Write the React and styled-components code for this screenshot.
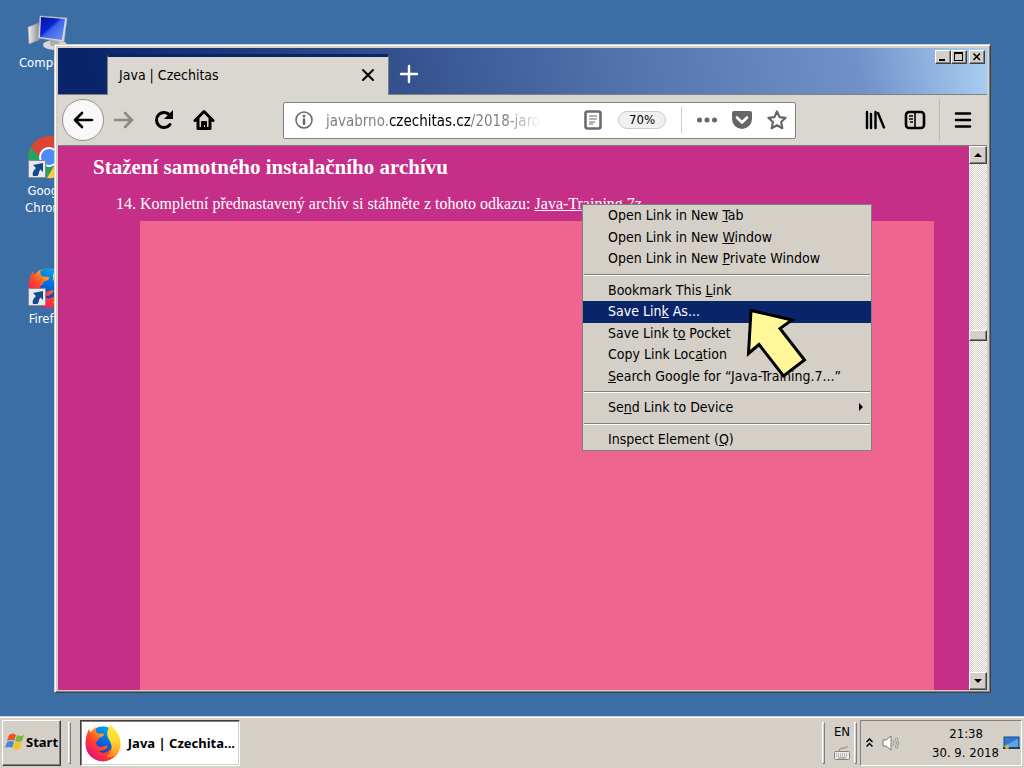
import React from "react";
import styled, { createGlobalStyle, css } from "styled-components";

const ui = `"DejaVu Sans Condensed", "DejaVu Sans", sans-serif`;
const uiBold = `"Noto Sans", sans-serif`;

const GlobalStyle = createGlobalStyle`
  *, *::before, *::after { box-sizing: border-box; }
  body { margin: 0; font-family: ${ui}; font-size: 13px; color: #000; }
  button, input { font: inherit; color: inherit; }
  h2, p, ol { margin: 0; padding: 0; }
`;

const raised = css`
  border: 1px solid;
  border-color: #fff #404040 #404040 #fff;
  box-shadow: inset -1px -1px 0 #808080;
`;

const Screen = styled.div`
  min-height: 100vh;
  display: flex;
  flex-direction: column;
  overflow: hidden;
`;

const Desktop = styled.main`
  position: relative;
  flex: 1;
  background: #3b6ea5;
`;

const Shortcuts = styled.nav`
  display: flex;
  flex-direction: column;
  width: 96px;
`;

const Shortcut = styled.a`
  display: flex;
  flex-direction: column;
  align-items: center;
  height: 128px;
  padding-top: 6px;
  color: #fff;
  font-size: 13px;
  line-height: 17px;
  text-align: center;
  text-decoration: none;
`;

const ShortcutLabel = styled.span`
  max-width: 64px;
`;

const Window = styled.section`
  position: absolute;
  inset: 44px 33px 23px 54px;
  display: flex;
  flex-direction: column;
  padding: 2px;
  background: #d4d0c8;
  border: 1px solid;
  border-color: #d4d0c8 #404040 #404040 #d4d0c8;
  box-shadow: inset 1px 1px 0 #fff, inset -1px -1px 0 #808080;
`;

const WindowInner = styled.div`
  flex: 1;
  min-height: 0;
  margin: 1px;
  margin-bottom: 0;
  display: flex;
  flex-direction: column;
`;

const TitleBar = styled.header`
  display: flex;
  align-items: flex-end;
  height: 47px;
  padding-left: 49px;
  border-bottom: 1px solid #808080;
  background: linear-gradient(80deg, #0a246a 4%, #36538f 38%, #5272ac 60%, #7191c8 86%, #a6caf0 99%);
`;

const Tab = styled.div`
  display: flex;
  align-items: center;
  justify-content: space-between;
  width: 282px;
  height: 41px;
  margin-bottom: -1px;
  padding: 0 12px 2px 11px;
  background: #dad7d0;
  border-top: 3px solid #0a246a;
  border-left: 1px solid #808080;
  border-right: 1px solid #808080;
  font-size: 14px;
`;

const IconButton = styled.button`
  display: grid;
  place-items: center;
  width: ${(p) => p.$w || 40}px;
  height: ${(p) => p.$h || 40}px;
  padding: 0;
  border: 0;
  background: none;
`;

const WindowControls = styled.div`
  display: flex;
  align-self: flex-start;
  margin: 2px 2px 0 auto;
`;

const ControlButton = styled.button`
  ${raised}
  display: grid;
  place-items: center;
  width: 16px;
  height: 14px;
  padding: 0;
  background: #d4d0c8;
  margin-left: ${(p) => (p.$apart ? 2 : 0)}px;
`;

const Toolbar = styled.div`
  display: flex;
  align-items: center;
  height: 51px;
  padding: 0 4px;
  background: #dad7d0;
  border-bottom: 1px solid #808080;
`;

const BackButton = styled.button`
  display: grid;
  place-items: center;
  width: 42px;
  height: 42px;
  padding: 0;
  border: 1px solid #96948f;
  border-radius: 50%;
  background: #f8f8f6;
`;

const ToolDivider = styled.span`
  width: 1px;
  height: 42px;
  margin: 0 3px 0 4px;
  background: #bcb9b3;
`;

const AddressBar = styled.div`
  display: flex;
  flex: 1;
  align-items: center;
  min-width: 0;
  height: 37px;
  margin: 0 59px;
  padding-left: 4px;
  background: #fff;
  border: 1px solid #808080;
  border-radius: 2px;
`;

const AddressInput = styled.input`
  flex: 1;
  min-width: 0;
  height: 30px;
  padding: 2px 0 0 6px;
  border: 0;
  outline: 0;
  font-size: 15px;
  color: transparent;
  background: linear-gradient(to right, #7c7c7c 69px, #000 69px, #000 151px, #7c7c7c 151px, #7c7c7c 185px, transparent 222px);
  -webkit-background-clip: text;
  background-clip: text;
`;

const ZoomBadge = styled.button`
  width: 48px;
  height: 18px;
  margin: 0 15px 0 6px;
  padding: 0;
  border: 1px solid #ccc;
  border-radius: 9px;
  background: #f0f0f0;
  font-size: 13px;
  line-height: 16px;
`;

const BarDivider = styled.span`
  width: 1px;
  height: 26px;
  margin-right: 8px;
  background: #ccc;
`;

const Viewport = styled.div`
  flex: 1;
  display: flex;
  min-height: 0;
`;

const Page = styled.article`
  flex: 1;
  display: flex;
  flex-direction: column;
  min-width: 0;
  padding: 8px 35px 0;
  overflow: hidden;
  background: #c62f88;
  color: #fff;
  font-family: "Liberation Serif", "Times New Roman", serif;
`;

const Heading = styled.h2`
  font-size: 21px;
  line-height: 26px;
`;

const Steps = styled.ol`
  margin-top: 14px;
  padding-left: 47px;
  font-size: 16px;
  line-height: 20px;
  white-space: nowrap;
  a { color: inherit; }
`;

const Figure = styled.div`
  flex: 1;
  margin: 7px 0 0 47px;
  background: #ee6690;
`;

const ScrollBar = styled.div`
  display: flex;
  flex-direction: column;
  width: 18px;
`;

const ScrollButton = styled.button`
  ${raised}
  display: grid;
  place-items: center;
  height: 18px;
  padding: 0;
  background: #d4d0c8;
`;

const Track = styled.div`
  flex: 1;
  display: grid;
  grid-template-rows: 167fr 11px 332fr;
  background: repeating-conic-gradient(#fff 0 25%, #d4d0c8 0 50%) 0 0 / 2px 2px;
`;

const Thumb = styled.div`
  ${raised}
  grid-row: 2;
  background: #d4d0c8;
`;

const Menu = styled.div`
  position: absolute;
  left: 582px;
  top: 204px;
  width: 290px;
  height: 247px;
  display: flex;
  flex-direction: column;
  background: #d4d0c8;
  border: 1px solid #808080;
`;

const MenuItem = styled.button`
  flex: 1;
  display: flex;
  align-items: center;
  justify-content: space-between;
  min-height: 0;
  padding: 0 8px 1px 25px;
  border: 0;
  font-size: 14px;
  line-height: 20px;
  text-align: left;
  white-space: pre;
  background: ${(p) => (p.$active ? "#0a246a" : "transparent")};
  color: ${(p) => (p.$active ? "#fff" : "#000")};
`;

const MenuRule = styled.hr`
  flex: none;
  width: calc(100% - 2px);
  height: 2px;
  margin: 4px 1px;
  border: 0;
  border-top: 1px solid #808080;
  border-bottom: 1px solid #fff;
`;

const Pointer = styled.svg`
  position: absolute;
  left: 744px;
  top: 304px;
`;

const Taskbar = styled.footer`
  display: flex;
  align-items: center;
  height: 52px;
  padding: 2px 2px 0;
  background: #d4d0c8;
  box-shadow: inset 0 1px 0 #d4d0c8, inset 0 2px 0 #fff;
`;

const StartButton = styled.button`
  ${raised}
  display: flex;
  align-items: center;
  gap: 1px;
  width: 59px;
  height: 46px;
  padding: 0 0 2px 2px;
  background: #d4d0c8;
  font-family: ${uiBold};
  font-size: 13px;
  font-weight: 700;
`;

const Grip = styled.span`
  width: 3px;
  height: 42px;
  margin: ${(p) => p.$margin};
  border: 1px solid;
  border-color: #fff #808080 #808080 #fff;
`;

const TaskButton = styled.button`
  display: flex;
  align-items: center;
  gap: 5px;
  width: 160px;
  height: 46px;
  padding: 0 4px;
  border: 1px solid;
  border-color: #404040 #fff #fff #404040;
  box-shadow: inset 1px 1px 0 #808080, inset -1px -1px 0 #d4d0c8;
  background: #fff;
  font-family: ${uiBold};
  font-size: 13px;
  font-weight: 700;
  white-space: nowrap;
`;

const Language = styled.div`
  display: flex;
  flex-direction: column;
  align-items: center;
  gap: 4px;
  width: 24px;
  padding-bottom: 3px;
  font-size: 13px;
  line-height: 18px;
`;

const Tray = styled.div`
  display: flex;
  align-items: center;
  width: 162px;
  height: 46px;
  padding: 0 1px 0 5px;
  border: 1px solid;
  border-color: #808080 #fff #fff #808080;
`;

const Clock = styled.time`
  flex: 1;
  padding-right: 4px;
  font-size: 13px;
  line-height: 19px;
  text-align: right;
`;

const ClockTime = styled.span`
  display: block;
  padding-right: 16px;
`;

function ShortcutArrow() {
  return (
    <g>
      <rect x="4.5" y="26.500" width="17" height="17" fill="#e6eaf0" stroke="#8c8c8c" />
      <path d="M9 42c-1-3 0-5 3-8l-3-3 10-2v9l-2.500-2.500c-2 2-1 4-3 6.500z" fill="#174a8c" />
    </g>
  );
}

function ComputerIcon() {
  return (
    <svg width="48" height="48" viewBox="0 0 48 48" aria-hidden="true">
      <defs>
        <linearGradient id="scr" x1="0" y1="0" x2="1" y2="1">
          <stop offset="0" stopColor="#0618a0" />
          <stop offset=".4" stopColor="#0b22d0" />
          <stop offset=".5" stopColor="#3d63ea" />
          <stop offset="1" stopColor="#6d96f5" />
        </linearGradient>
        <linearGradient id="case" x1="0" y1="0" x2="1" y2="0">
          <stop offset="0" stopColor="#f2f2f2" />
          <stop offset="1" stopColor="#8d8d8d" />
        </linearGradient>
      </defs>
      <path d="M4 21l11-4v17L5 38z" fill="url(#case)" stroke="#999" strokeWidth=".6" />
      <ellipse cx="31" cy="39" rx="12" ry="5" fill="#d6d6d6" />
      <path d="M25 32h9l2 8h-9z" fill="#aaa" />
      <path d="M16 10l27 2-3 24-26-4z" fill="#d8dce2" stroke="#a5a8ad" strokeWidth=".6" />
      <path d="M17 11l24 2-3 21-22-3z" fill="url(#scr)" />
    </svg>
  );
}

function ChromeIcon() {
  return (
    <svg width="48" height="48" viewBox="0 0 48 48" aria-hidden="true">
      <circle cx="25" cy="23" r="21" fill="#db4437" />
      <path d="M7 13a21 21 0 0 0 16 31l9-17-14-1z" fill="#1fa463" />
      <path d="M46 17a21 21 0 0 1-23 27l10-17V17z" fill="#ffcd40" />
      <circle cx="25" cy="23" r="10" fill="#fff" />
      <circle cx="25" cy="23" r="8" fill="#4c8bf5" />
      <ShortcutArrow />
    </svg>
  );
}

function FirefoxArt({ id }) {
  return (
    <g>
      <defs>
        <linearGradient id={id + "o"} x1="0.9" y1="0.1" x2="0.2" y2="0.9">
          <stop offset="0" stopColor="#fff44f" />
          <stop offset=".35" stopColor="#ffa821" />
          <stop offset=".65" stopColor="#ff4528" />
          <stop offset="1" stopColor="#e8127a" />
        </linearGradient>
        <linearGradient id={id + "b"} x1="0.7" y1="0" x2="0.3" y2="1">
          <stop offset="0" stopColor="#00a6f5" />
          <stop offset=".6" stopColor="#0a5bd8" />
          <stop offset="1" stopColor="#302a9c" />
        </linearGradient>
        <linearGradient id={id + "y"} x1="0" y1="0" x2="0" y2="1">
          <stop offset="0" stopColor="#fff04a" />
          <stop offset=".5" stopColor="#ffd52e" />
          <stop offset="1" stopColor="#ff8c1a" />
        </linearGradient>
      </defs>
      <circle cx="18" cy="20" r="17.500" fill={`url(#${id}o)`} />
      <circle cx="18" cy="17" r="14.500" fill={`url(#${id}b)`} />
      <path d="M1 22C0 15 2 9 4 5c1 1 1 2 1 4l2-1c1-2 2-3 4-5 0 3 0 4 1 6 2 1 5 0 7 1 0 3-3 3-5 4-1 2-1 3-3 4 0 3 2 5 5 5 3 0 4-2 7-1-2 4-5 5-9 5 3 3 9 2 12-2 2-3 2-7 1-11-2-7-4-9-2-14 3 4 7 7 9 12 2 8 1 15-4 20-5 5-13 7-20 3C5 32 2 28 1 22z" fill={`url(#${id}o)`} />
      <path d="M25 1c4 4 9 8 10 14 2 8-1 14-6 17-4 2-7 1-7 0 6-3 6-8 3-15-4-6-3-9 0-16z" fill={`url(#${id}y)`} />
    </g>
  );
}

function FirefoxIcon() {
  return (
    <svg width="48" height="48" viewBox="0 0 48 48" aria-hidden="true">
      <g transform="translate(4 4) scale(1.12)">
        <FirefoxArt id="d" />
      </g>
      <ShortcutArrow />
    </svg>
  );
}

const stroke = { fill: "none", stroke: "currentColor", strokeWidth: 2.6, strokeLinecap: "round", strokeLinejoin: "round" };

function Svg({ w = 22, h = 22, children, ...rest }) {
  return (
    <svg width={w} height={h} viewBox={`0 0 ${w} ${h}`} aria-hidden="true" {...rest}>
      {children}
    </svg>
  );
}

export default function App() {
  return (
    <Screen>
      <GlobalStyle />
      <Desktop>
        <Shortcuts aria-label="Desktop">
          <Shortcut href="#computer"><ComputerIcon /><ShortcutLabel>Computer</ShortcutLabel></Shortcut>
          <Shortcut href="#chrome"><ChromeIcon /><ShortcutLabel>Google Chrome</ShortcutLabel></Shortcut>
          <Shortcut href="#firefox"><FirefoxIcon /><ShortcutLabel>Firefox</ShortcutLabel></Shortcut>
        </Shortcuts>

        <Window>
          <WindowInner>
            <TitleBar>
              <Tab>
                <span>Java | Czechitas</span>
                <IconButton $w={16} $h={24} aria-label="Close tab">
                  <Svg w={14} h={14}><path d="M2 2l10 10M12 2L2 12" {...stroke} strokeWidth="2" /></Svg>
                </IconButton>
              </Tab>
              <IconButton aria-label="New tab">
                <Svg><path d="M11 3v16M3 11h16" {...stroke} stroke="#fff" strokeWidth="2.400" /></Svg>
              </IconButton>
              <WindowControls>
                <ControlButton aria-label="Minimize"><Svg w={10} h={8}><path d="M1 6h6v2H1z" /></Svg></ControlButton>
                <ControlButton aria-label="Maximize">
                  <Svg w={10} h={10}><path d="M0 0h9v9H0zM1 2v6h7V2z" fillRule="evenodd" /></Svg>
                </ControlButton>
                <ControlButton $apart aria-label="Close">
                  <Svg w={10} h={8}><path d="M1.500.5l6.500 6.500M8 .5L1.500 7" stroke="#000" strokeWidth="1.500" /></Svg>
                </ControlButton>
              </WindowControls>
            </TitleBar>

            <Toolbar>
              <BackButton aria-label="Back">
                <Svg><path d="M20 11H3M10 4l-7 7 7 7" {...stroke} /></Svg>
              </BackButton>
              <IconButton aria-label="Forward">
                <Svg color="#8c8a86"><path d="M2 11h17M12 4l7 7-7 7" {...stroke} /></Svg>
              </IconButton>
              <IconButton aria-label="Reload">
                <Svg>
                  <path d="M17 15.500A7.500 7.500 0 1 1 17 6.500" {...stroke} strokeWidth="3" />
                  <path d="M20 1v9h-9z" />
                </Svg>
              </IconButton>
              <IconButton aria-label="Home">
                <Svg>
                  <path d="M2 11.500L11 2.500l9 9M5 10v9.500h12V10" {...stroke} strokeWidth="3" />
                  <path d="M8 19v-6q0-1 1-1h4q1 0 1 1v6h-2v-3h-1v3z" />
                </Svg>
              </IconButton>
              <AddressBar>
                <IconButton $w={32} $h={30} aria-label="Site information">
                  <Svg color="#6b6b6b">
                    <circle cx="11" cy="11" r="8" {...stroke} strokeWidth="1.600" />
                    <path d="M11 10.500v4.500" {...stroke} />
                    <circle cx="11" cy="7" r="1.500" fill="currentColor" />
                  </Svg>
                </IconButton>
                <AddressInput aria-label="Address" defaultValue="javabrno.czechitas.cz/2018-jaro" />
                <IconButton $w={38} $h={30} aria-label="Reader view">
                  <Svg color="#6b6b6b">
                    <rect x="3.500" y="2.500" width="15" height="17" rx="2" {...stroke} />
                    <path d="M7 7h8M7 10h8M7 13h6M7 15h4" stroke="currentColor" strokeWidth="1.200" />
                  </Svg>
                </IconButton>
                <ZoomBadge>70%</ZoomBadge>
                <BarDivider />
                <IconButton $w={34} $h={30} aria-label="Page actions">
                  <Svg color="#666">
                    <circle cx="3.500" cy="11" r="2.500" fill="currentColor" />
                    <circle cx="11" cy="11" r="2.500" fill="currentColor" />
                    <circle cx="18.500" cy="11" r="2.500" fill="currentColor" />
                  </Svg>
                </IconButton>
                <IconButton $w={35} $h={30} aria-label="Save to Pocket">
                  <Svg>
                    <path d="M3 2h16q2 0 2 2v6a10 10 0 0 1-20 0V4q0-2 2-2z" fill="#666" />
                    <path d="M6 8.500l5 5 5-5" {...stroke} stroke="#fff" />
                  </Svg>
                </IconButton>
                <IconButton $w={36} $h={30} aria-label="Bookmark this page">
                  <Svg color="#666">
                    <path d="M11 2.500l2.600 5.600 6 .7-4.500 4.200 1.200 6.200-5.300-3-5.300 3L6.900 13 2.400 8.800l6-.7z" {...stroke} strokeWidth="2.200" />
                  </Svg>
                </IconButton>
              </AddressBar>
              <IconButton aria-label="Library">
                <Svg><path d="M3 3v16M7 5v14M11.500 3v16M14 4l6 14.500" {...stroke} strokeWidth="2.400" /></Svg>
              </IconButton>
              <IconButton aria-label="Sidebars">
                <Svg>
                  <rect x="2" y="3" width="18" height="16" rx="3" {...stroke} />
                  <path d="M11 3v16" {...stroke} strokeWidth="1.600" />
                  <path d="M5 7h4M5 10h4M6 13h3" stroke="currentColor" strokeWidth="1.300" />
                </Svg>
              </IconButton>
              <ToolDivider />
              <IconButton aria-label="Open menu">
                <Svg><path d="M4 4.500h14M4 11h14M4 17.500h14" {...stroke} /></Svg>
              </IconButton>
            </Toolbar>

            <Viewport>
              <Page>
                <Heading>Stažení samotného instalačního archívu</Heading>
                <Steps start={14}>
                  <li>Kompletní přednastavený archív si stáhněte z tohoto odkazu: <a href="#archive">Java-Training.7z</a></li>
                </Steps>
                <Figure />
              </Page>
              <ScrollBar>
                <ScrollButton aria-label="Scroll up"><Svg w={8} h={4}><path d="M4 0l4 4H0z" /></Svg></ScrollButton>
                <Track><Thumb /></Track>
                <ScrollButton aria-label="Scroll down"><Svg w={8} h={4}><path d="M0 0h8L4 4z" /></Svg></ScrollButton>
              </ScrollBar>
            </Viewport>
          </WindowInner>
        </Window>

        <Menu role="menu">
          <MenuItem role="menuitem"><span>Open Link in New <u>T</u>ab</span></MenuItem>
          <MenuItem role="menuitem"><span>Open Link in New <u>W</u>indow</span></MenuItem>
          <MenuItem role="menuitem"><span>Open Link in New <u>P</u>rivate Window</span></MenuItem>
          <MenuRule />
          <MenuItem role="menuitem"><span>Bookmark This <u>L</u>ink</span></MenuItem>
          <MenuItem role="menuitem" $active><span>Save Lin<u>k</u> As...</span></MenuItem>
          <MenuItem role="menuitem"><span>Save Link t<u>o</u> Pocket</span></MenuItem>
          <MenuItem role="menuitem"><span>Copy Link Loc<u>a</u>tion</span></MenuItem>
          <MenuItem role="menuitem"><span><u>S</u>earch Google for “Java-Training.7...”</span></MenuItem>
          <MenuRule />
          <MenuItem role="menuitem">
            <span>Se<u>n</u>d Link to Device</span>
            <Svg w={4} h={8}><path d="M0 0l4 4-4 4z" /></Svg>
          </MenuItem>
          <MenuRule />
          <MenuItem role="menuitem"><span>Inspect Element (<u>Q</u>)</span></MenuItem>
        </Menu>

        <Pointer width="66" height="78" viewBox="0 0 66 78" aria-hidden="true">
          <path d="M7 6.500L48 16 36 24.500 60.500 56 39.500 72 15 40.500 4.500 49.500z" fill="#fff799" stroke="#000" strokeWidth="3" />
        </Pointer>
      </Desktop>

      <Taskbar>
        <StartButton>
          <Svg w={20} h={18}>
            <path d="M4 2q4-3 7 0L9 8Q6 6 2 8z" fill="#e8562a" />
            <path d="M12 2q4 2 7 0l-2 6q-4 2-7 0z" fill="#7fb63b" />
            <path d="M2 9q4-2 7 0l-2 6q-3-2-7 0z" fill="#3f8ad8" />
            <path d="M10 9q3 2 7 0l-2 6q-4 3-7 0z" fill="#f9c222" />
          </Svg>
          Start
        </StartButton>
        <Grip $margin="0 9px 0 7px" />
        <TaskButton>
          <Svg w={38} h={38}><FirefoxArt id="t" /></Svg>
          Java | Czechita...
        </TaskButton>
        <Grip $margin="0 5px 0 auto" />
        <Language>
          EN
          <Svg w={18} h={16} color="#8a8781">
            <rect x="1.500" y="6.500" width="15" height="8" rx="1" fill="#eceae6" stroke="currentColor" />
            <path d="M3 9h12M3 11h12" stroke="currentColor" strokeDasharray="1 1" />
            <path d="M5 13h8M6 6q0-3 4-3t5-2" fill="none" stroke="currentColor" />
          </Svg>
        </Language>
        <Grip $margin="0 3px 0 0" />
        <Tray>
          <Svg w={7} h={10}><path d="M.5 4l3-3 3 3M.5 8.500l3-3 3 3" fill="none" stroke="#000" strokeWidth="1.500" /></Svg>
          <Svg w={26} h={18}>
            <path d="M10 6h3l5-4v14l-5-4h-3z" fill="#fff" stroke="#777" />
            <path d="M20 6q2 3 0 6M22 4q3 5 0 10M24 3q3 6 0 12" fill="none" stroke="#999" />
          </Svg>
          <Clock><ClockTime>21:38</ClockTime>30. 9. 2018</Clock>
          <Svg w={17} h={14}>
            <rect x="1" y="1" width="15" height="10" fill="#2f78d0" stroke="#1d4c8c" />
            <path d="M1 10L15 3v8H1z" fill="#5ca4ea" />
            <path d="M0 11h17v2H0z" fill="#24415f" />
            <circle cx="4" cy="11" r="2" fill="#e9b52c" />
          </Svg>
        </Tray>
      </Taskbar>
    </Screen>
  );
}
